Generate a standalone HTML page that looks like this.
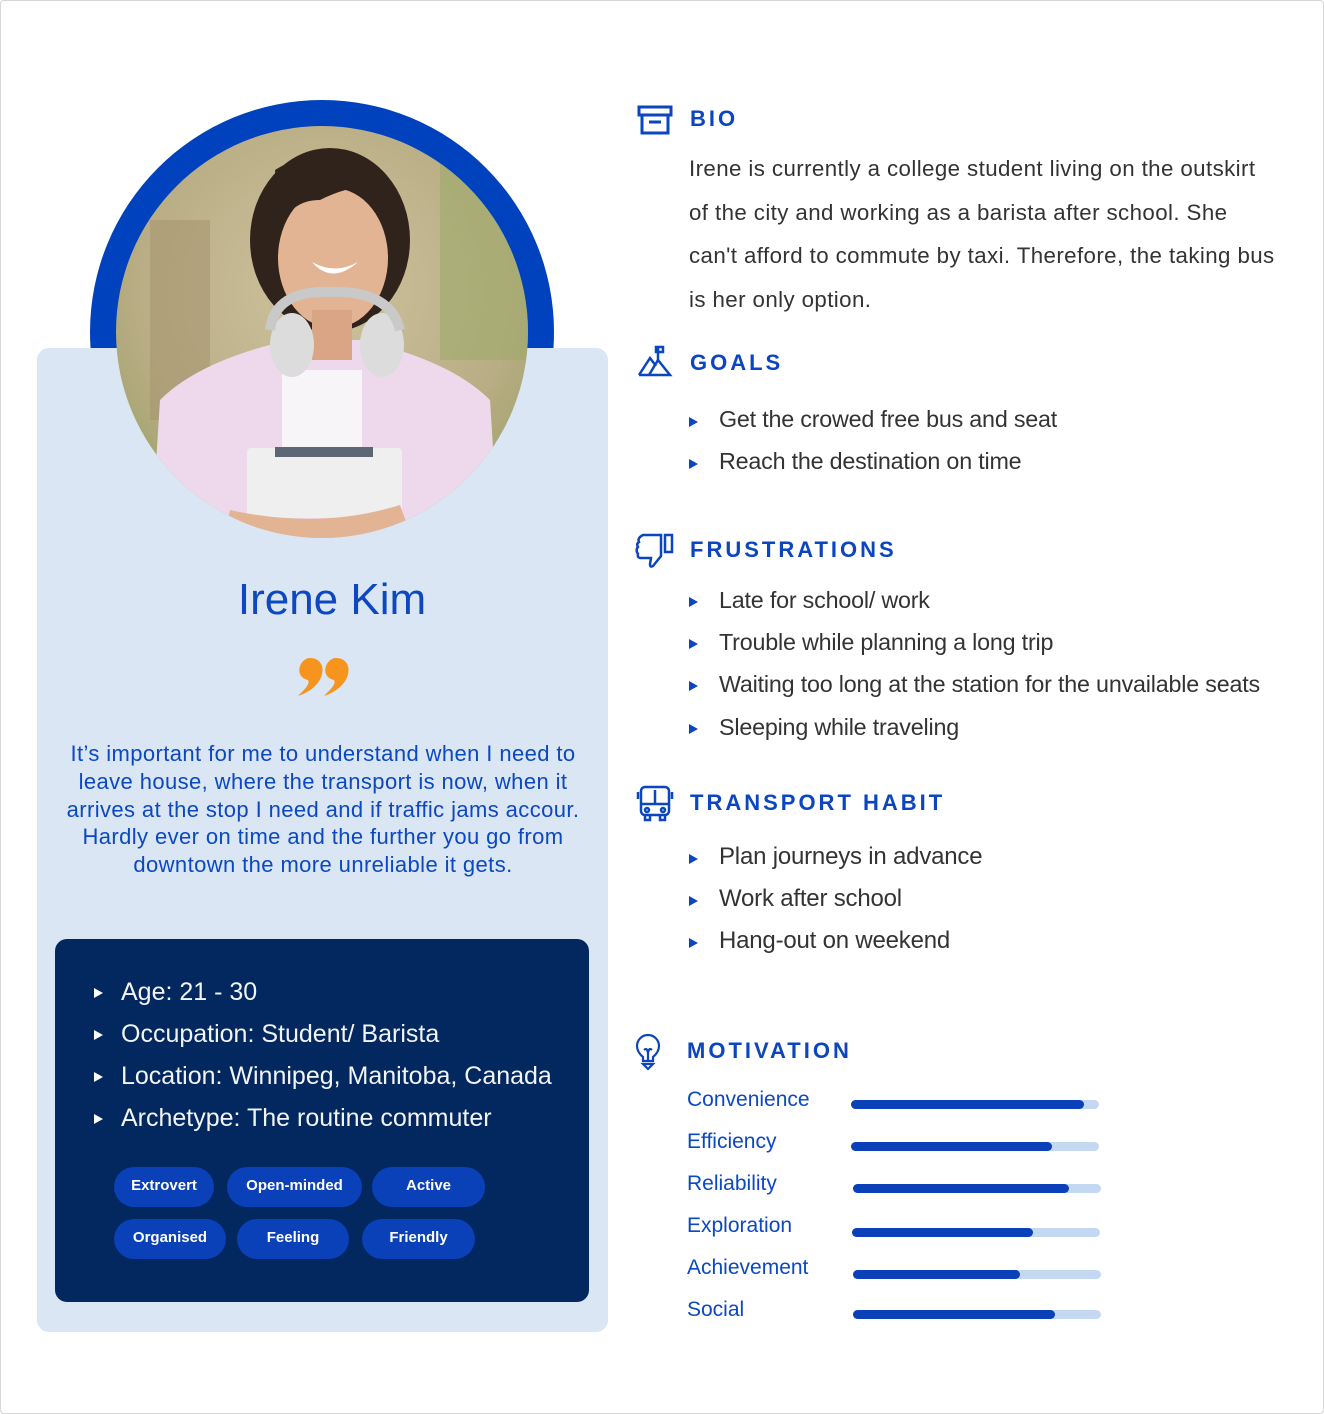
<!DOCTYPE html>
<html><head><meta charset="utf-8">
<style>
*{margin:0;padding:0;box-sizing:border-box}
body{width:1324px;height:1414px;background:#fff;position:relative;overflow:hidden;font-family:"Liberation Sans",sans-serif}
.frame{position:absolute;left:0;top:0;width:1324px;height:1414px;border:1px solid #d6d6d6;border-radius:4px}
.abs{position:absolute}
.card{left:37px;top:348px;width:571px;height:984px;background:#dae6f4;border-radius:12px}
.name{left:37px;width:590px;top:575px;text-align:center;font-size:44px;color:#0b48c2}
.quote{left:23px;width:600px;top:740px;text-align:center;font-size:22px;line-height:27.8px;color:#0b48c2;letter-spacing:0.4px;white-space:nowrap}
.dark{left:55px;top:939px;width:534px;height:363px;background:#03285f;border-radius:12px}
.li{position:absolute;left:121px;color:#f2f4f8;font-size:25px;white-space:nowrap}
.tri{position:absolute;width:0;height:0;border-top:5px solid transparent;border-bottom:5px solid transparent;border-left:9px solid #fff}
.pill{position:absolute;height:40px;border-radius:20px;background:#0a40b8;color:#fff;font-weight:bold;font-size:15px;text-align:center;line-height:38px}
.h{position:absolute;left:690px;font-size:22px;font-weight:bold;color:#0b45c0;letter-spacing:3px}
.bio{left:689px;top:147px;width:620px;font-size:22.3px;line-height:43.5px;color:#333;letter-spacing:0.4px;white-space:nowrap}
.bl{position:absolute;left:719px;font-size:23.3px;color:#333;white-space:nowrap;letter-spacing:-0.2px}
.bt{position:absolute;left:689px;width:0;height:0;border-top:5px solid transparent;border-bottom:5px solid transparent;border-left:9px solid #0b45c0}
.ml{position:absolute;left:687px;font-size:21px;color:#0b48c2}
.track{position:absolute;height:9px;background:#c5d8f1;border-radius:5px;width:248px}
.fill{position:absolute;left:0;top:0;height:9px;background:#0a40b8;border-radius:5px}
</style></head><body>
<div class="frame"></div>
<svg class="abs" style="left:0;top:0" width="640" height="348">
<circle cx="322" cy="332" r="232" fill="#0042bd"/>
</svg>
<div class="abs card"></div>
<svg class="abs" style="left:0;top:0" width="640" height="560">
<defs><clipPath id="c"><circle cx="322" cy="332" r="206"/></clipPath>
<radialGradient id="bg" cx="0.5" cy="0.4" r="0.7"><stop offset="0" stop-color="#cfc3a0"/><stop offset="0.6" stop-color="#b8ad84"/><stop offset="1" stop-color="#8e9a5a"/></radialGradient></defs>
<g clip-path="url(#c)">
<rect x="100" y="110" width="450" height="450" fill="url(#bg)"/>
<rect x="150" y="220" width="60" height="200" fill="#a69672" opacity="0.6"/>
<rect x="440" y="160" width="100" height="200" fill="#9eaa6a" opacity="0.6"/>
<path d="M150 560 L160 400 Q200 360 290 340 L360 340 Q450 360 490 400 L500 560Z" fill="#eed9ec"/>
<rect x="282" y="370" width="80" height="90" fill="#f7f5f8"/>
<ellipse cx="330" cy="240" rx="80" ry="92" fill="#2f231c"/>
<ellipse cx="333" cy="258" rx="55" ry="70" fill="#e2b494"/>
<rect x="312" y="310" width="40" height="50" fill="#d9a585"/>
<path d="M312 262 Q332 285 358 262 Q335 275 312 262Z" fill="#fff"/>
<path d="M275 170 Q340 130 390 190 Q360 180 320 200 Q290 200 280 230Z" fill="#2f231c"/>
<ellipse cx="292" cy="345" rx="22" ry="32" fill="#dcdcdc"/>
<ellipse cx="382" cy="345" rx="22" ry="32" fill="#dcdcdc"/>
<path d="M270 330 Q275 290 330 292 Q390 290 400 330" stroke="#c9c9c9" stroke-width="10" fill="none"/>
<rect x="247" y="448" width="155" height="70" rx="4" fill="#efefef"/>
<rect x="275" y="447" width="98" height="10" fill="#5c6675"/>
<path d="M230 510 Q320 530 400 505 L420 560 L220 560Z" fill="#e2b494"/>
</g>
</svg>
<div class="abs name">Irene Kim</div>
<svg class="abs" style="left:296px;top:656px" width="56" height="42"><path d="M14 2 C24 2 28 10 26 18 C24 28 14 36 2 40 C10 32 14 28 12 24 C4 22 2 16 4 10 C6 5 10 2 14 2Z" fill="#f7941d"/><path d="M40 2 C50 2 54 10 52 18 C50 28 40 36 28 40 C36 32 40 28 38 24 C30 22 28 16 30 10 C32 5 36 2 40 2Z" fill="#f7941d"/></svg>
<div class="abs quote">It’s important for me to understand when I need to<br>leave house, where the transport is now, when it<br>arrives at the stop I need and if traffic jams accour.<br>Hardly ever on time and the further you go from<br>downtown the more unreliable it gets.</div>
<div class="abs dark"></div>
<div class="tri" style="left:94px;top:988px"></div><div class="li" style="top:978px">Age: 21 - 30</div>
<div class="tri" style="left:94px;top:1030px"></div><div class="li" style="top:1020px">Occupation: Student/ Barista</div>
<div class="tri" style="left:94px;top:1072px"></div><div class="li" style="top:1062px">Location: Winnipeg, Manitoba, Canada</div>
<div class="tri" style="left:94px;top:1114px"></div><div class="li" style="top:1104px">Archetype: The routine commuter</div>
<div class="pill" style="left:114px;top:1167px;width:100px">Extrovert</div>
<div class="pill" style="left:227px;top:1167px;width:135px">Open-minded</div>
<div class="pill" style="left:372px;top:1167px;width:113px">Active</div>
<div class="pill" style="left:114px;top:1219px;width:112px">Organised</div>
<div class="pill" style="left:237px;top:1219px;width:112px">Feeling</div>
<div class="pill" style="left:362px;top:1219px;width:113px">Friendly</div>

<svg class="abs" style="left:636px;top:104px" width="40" height="34" fill="none" stroke="#0b45c0" stroke-width="3"><rect x="3" y="3" width="32" height="8"/><rect x="6" y="11" width="26" height="18"/><line x1="13" y1="18" x2="25" y2="18"/></svg>
<div class="h" style="top:106px">BIO</div>
<div class="abs bio">Irene is currently a college student living on the outskirt<br>of the city and working as a barista after school. She<br>can't afford to commute by taxi. Therefore, the taking bus<br>is her only option.</div>

<svg class="abs" style="left:637px;top:344px" width="38" height="34" fill="none" stroke="#0b45c0" stroke-width="2.5"><path d="M2 31 L13 14 L19 22 M12 31 L21 16 L33 31 Z M2 31 H33"/><line x1="21" y1="16" x2="21" y2="4"/><rect x="19" y="3" width="7" height="5"/></svg>
<div class="h" style="top:350px">GOALS</div>
<div class="bt" style="top:417px"></div><div class="bl" style="top:406px">Get the crowed free bus and seat</div>
<div class="bt" style="top:459px"></div><div class="bl" style="top:448px">Reach the destination on time</div>

<svg class="abs" style="left:634px;top:532px" width="44" height="38" fill="none" stroke="#0b45c0" stroke-width="2.5"><path d="M9 3 H27 V24 L19 34 Q16 36 16 32 L17 26 H7 Q3 26 4 22 L3 20 Q2 17 4 15 Q2 12 5 10 Q3 6 9 3Z"/><rect x="31" y="3" width="7" height="17"/></svg>
<div class="h" style="top:537px">FRUSTRATIONS</div>
<div class="bt" style="top:597px"></div><div class="bl" style="top:587px">Late for school/ work</div>
<div class="bt" style="top:639px"></div><div class="bl" style="top:629px">Trouble while planning a long trip</div>
<div class="bt" style="top:681px"></div><div class="bl" style="top:671px">Waiting too long at the station for the unvailable seats</div>
<div class="bt" style="top:724px"></div><div class="bl" style="top:714px">Sleeping while traveling</div>

<svg class="abs" style="left:636px;top:785px" width="40" height="38" fill="none" stroke="#0b45c0" stroke-width="2.5"><rect x="5" y="2" width="28" height="28" rx="4"/><line x1="5" y1="19" x2="33" y2="19"/><line x1="19" y1="5" x2="19" y2="19"/><line x1="2" y1="7" x2="2" y2="14"/><line x1="36" y1="7" x2="36" y2="14"/><circle cx="11" cy="25" r="2"/><circle cx="27" cy="25" r="2"/><path d="M9 30 V35 H14 V30 M24 30 V35 H29 V30"/></svg>
<div class="h" style="top:790px">TRANSPORT HABIT</div>
<div class="bt" style="top:854px"></div><div class="bl" style="top:843px;font-size:24px">Plan journeys in advance</div>
<div class="bt" style="top:896px"></div><div class="bl" style="top:885px;font-size:24px">Work after school</div>
<div class="bt" style="top:938px"></div><div class="bl" style="top:927px;font-size:24px">Hang-out on weekend</div>

<svg class="abs" style="left:634px;top:1033px" width="30" height="40" fill="none" stroke="#0b45c0" stroke-width="2.2"><path d="M9 24 Q3 19 3 13 A11 11 0 0 1 25 13 Q25 19 19 24 V28 H9Z"/><path d="M10 17 Q13 14 14 20 V27 M18 17 Q15 14 14 20"/><path d="M9 31 H19 L14 36Z"/></svg>
<div class="h" style="top:1038px;left:687px">MOTIVATION</div>
<div class="ml" style="top:1088px">Convenience</div><div class="track" style="left:851px;top:1100px"><div class="fill" style="width:233px"></div></div>
<div class="ml" style="top:1130px">Efficiency</div><div class="track" style="left:851px;top:1142px"><div class="fill" style="width:201px"></div></div>
<div class="ml" style="top:1172px">Reliability</div><div class="track" style="left:853px;top:1184px"><div class="fill" style="width:216px"></div></div>
<div class="ml" style="top:1214px">Exploration</div><div class="track" style="left:852px;top:1228px"><div class="fill" style="width:181px"></div></div>
<div class="ml" style="top:1256px">Achievement</div><div class="track" style="left:853px;top:1270px"><div class="fill" style="width:167px"></div></div>
<div class="ml" style="top:1298px">Social</div><div class="track" style="left:853px;top:1310px"><div class="fill" style="width:202px"></div></div>
</body></html>
